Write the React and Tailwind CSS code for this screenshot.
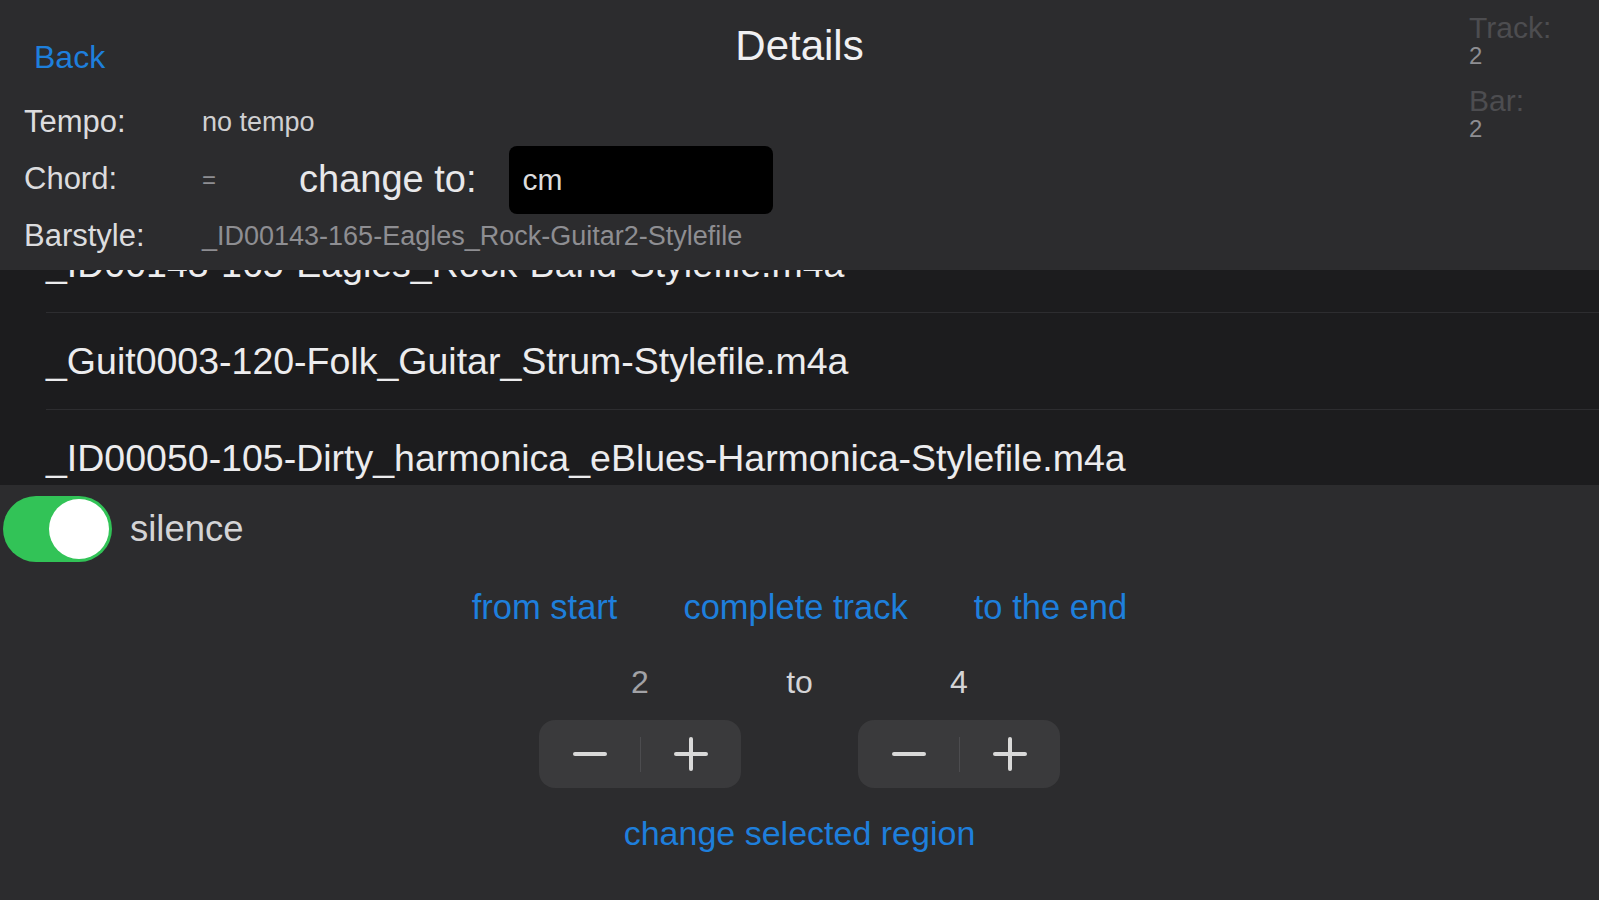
import { useState } from "react";

const styleFiles = [
  "_ID00143-165-Eagles_Rock-Band-Stylefile.m4a",
  "_Guit0003-120-Folk_Guitar_Strum-Stylefile.m4a",
  "_ID00050-105-Dirty_harmonica_eBlues-Harmonica-Stylefile.m4a",
];

function Stepper({ onMinus, onPlus }) {
  return (
    <div className="flex h-[68px] w-[202px] items-center rounded-[16px] bg-[#3a3a3c]">
      <button onClick={onMinus} className="flex h-full w-[101px] items-center justify-center">
        <svg width="34" height="34" viewBox="0 0 34 34">
          <line x1="2" y1="17" x2="32" y2="17" stroke="#d9d9d9" strokeWidth="4" strokeLinecap="round" />
        </svg>
      </button>
      <div className="h-[35px] w-px bg-[#4c4c4f]" />
      <button onClick={onPlus} className="flex h-full w-[100px] items-center justify-center">
        <svg width="34" height="34" viewBox="0 0 34 34">
          <line x1="2" y1="17" x2="32" y2="17" stroke="#d9d9d9" strokeWidth="4" strokeLinecap="round" />
          <line x1="17" y1="2" x2="17" y2="32" stroke="#d9d9d9" strokeWidth="4" strokeLinecap="round" />
        </svg>
      </button>
    </div>
  );
}

export default function App() {
  const [silence, setSilence] = useState(true);
  const [fromBar, setFromBar] = useState(2);
  const [toBar, setToBar] = useState(4);

  return (
    <div className="h-[900px] overflow-hidden bg-[#2c2c2e] font-['Liberation_Sans',Arial,sans-serif] text-[#e5e5e7]">
      {/* header */}
      <header className="grid h-[270px] grid-cols-[1fr_auto_1fr] grid-rows-[94px_auto] bg-[#2c2c2e]">
        <div className="pl-[34px] pt-[37px]">
          <button className="text-[32px] leading-[40px] text-[#1e7fdc]">Back</button>
        </div>
        <h1 className="pt-[21px] text-[42px] leading-[50px] text-[#f0f0f2]">Details</h1>
        <div className="row-span-2 flex justify-end">
          <div className="w-[130px] pt-[13px]">
            <div className="text-[30px] leading-[30px] text-[#4d4d50]">Track:</div>
            <div className="text-[24px] leading-[26px] text-[#8e8e92]">2</div>
            <div className="mt-[17px] text-[30px] leading-[30px] text-[#4d4d50]">Bar:</div>
            <div className="text-[24px] leading-[26px] text-[#8e8e92]">2</div>
          </div>
        </div>

        <div className="col-span-2 pl-[24px]">
          <div className="flex h-[57px] items-center">
            <span className="w-[178px] text-[31px] text-[#dcdcde]">Tempo:</span>
            <span className="text-[27px] text-[#d0d0d2]">no tempo</span>
          </div>
          <div className="flex h-[57px] items-center">
            <span className="w-[178px] text-[31px] text-[#dcdcde]">Chord:</span>
            <span className="w-[97px] text-[24px] text-[#8e8e92]">=</span>
            <span className="text-[38px] text-[#e8e8ea]">change to:</span>
            <div className="ml-[33px] flex h-[68px] w-[264px] shrink-0 items-center rounded-[8px] bg-black pl-[13px] text-[30px] text-[#dcdcde]">
              cm
            </div>
          </div>
          <div className="flex h-[57px] items-center">
            <span className="w-[178px] text-[31px] text-[#dcdcde]">Barstyle:</span>
            <span className="text-[27px] text-[#8e8e92]">_ID00143-165-Eagles_Rock-Guitar2-Stylefile</span>
          </div>
        </div>
      </header>

      {/* style file list, scrolled */}
      <div className="h-[215px] overflow-hidden bg-[#1c1c1e]">
        <ul className="-mt-[54px]">
          {styleFiles.map((name) => (
            <li key={name} className="pl-[46px]">
              <div className="flex h-[97px] items-center border-b border-[#2d2d30] text-[37.5px] whitespace-nowrap text-[#ececee]">
                {name}
              </div>
            </li>
          ))}
        </ul>
      </div>

      {/* silence controls */}
      <section className="pt-[11px]">
        <div className="flex items-center">
          <button
            onClick={() => setSilence(!silence)}
            className={`ml-[3px] flex h-[66px] w-[109px] items-center rounded-full p-[3px] ${
              silence ? "justify-end bg-[#32c357]" : "justify-start bg-[#39393d]"
            }`}
          >
            <span className="h-[60px] w-[60px] rounded-full bg-white" />
          </button>
          <span className="ml-[18px] text-[36.5px] text-[#d4d4d6]">silence</span>
        </div>

        <div className="mt-[25px] flex justify-center gap-[66px] text-[34.5px] leading-[40px] text-[#1e7fdc]">
          <button onClick={() => setFromBar(1)}>from start</button>
          <button>complete track</button>
          <button>to the end</button>
        </div>

        <div className="mt-[37px] grid grid-cols-[202px_117px_202px] justify-center text-center text-[32px] leading-[36px]">
          <span className="text-[#a2a2a6]">{fromBar}</span>
          <span className="text-[#d4d4d6]">to</span>
          <span className="text-[#d4d4d6]">{toBar}</span>
        </div>

        <div className="mt-[20px] grid grid-cols-[202px_117px_202px] justify-center">
          <Stepper onMinus={() => setFromBar(Math.max(1, fromBar - 1))} onPlus={() => setFromBar(fromBar + 1)} />
          <div />
          <Stepper onMinus={() => setToBar(Math.max(1, toBar - 1))} onPlus={() => setToBar(toBar + 1)} />
        </div>

        <div className="mt-[25px] flex justify-center">
          <button className="text-[34px] leading-[40px] text-[#1e7fdc]">change selected region</button>
        </div>
      </section>
    </div>
  );
}
